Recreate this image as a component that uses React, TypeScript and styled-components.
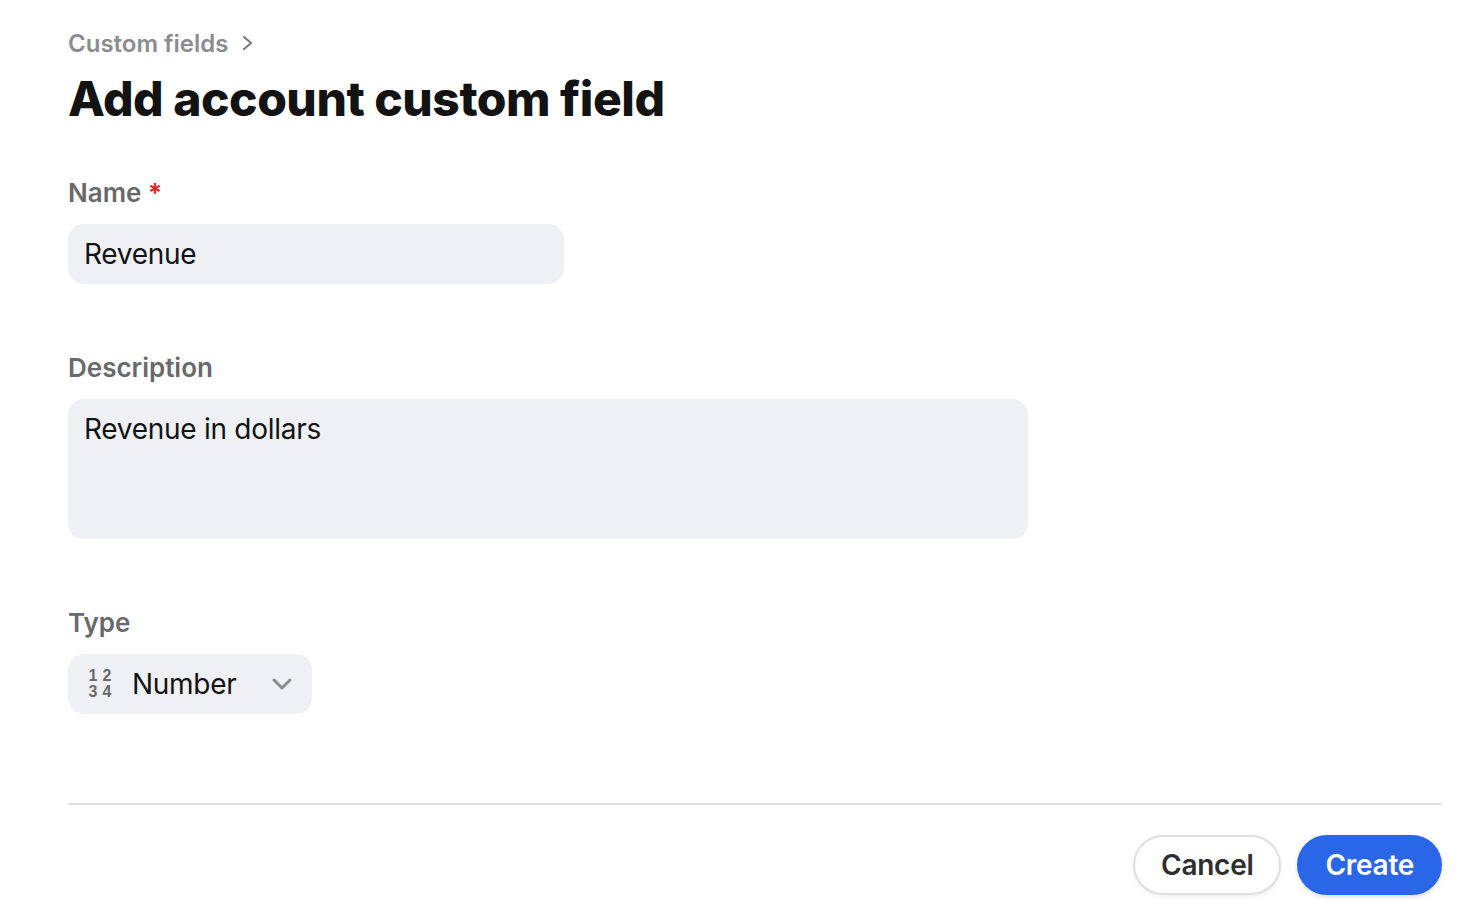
import React from 'react';
import styled, { createGlobalStyle, css } from 'styled-components';

const GlobalStyle = createGlobalStyle`
  * { box-sizing: border-box; }
  body { margin: 0; background: #fff; color: #131313; font-family: Inter, "Liberation Sans", sans-serif; font-optical-sizing: none; }
`;

const Form = styled.form`
  padding: 28px 38px 16px 68px;
`;

const Breadcrumb = styled.nav`
  display: flex;
  align-items: center;
  gap: 14px;
  height: 32px;
  color: #8b8c8f;
`;

const BreadcrumbLink = styled.a`
  color: inherit;
  font-size: 24px;
  font-weight: 600;
  line-height: 32px;
  text-decoration: none;
`;

const Title = styled.h1`
  margin: 8px 0 46px;
  font-size: 48px;
  font-weight: 800;
  line-height: 62px;
  letter-spacing: -0.01em;
`;

const Field = styled.div`
  display: flex;
  flex-direction: column;
  align-items: flex-start;
  gap: 14px;
  margin-bottom: 67px;
`;

const Label = styled.label`
  color: #68696b;
  font-size: 26px;
  font-weight: 600;
  line-height: 34px;
`;

const Required = styled.span`
  color: #e0261f;
`;

const control = css`
  border: 0;
  border-radius: 16px;
  background: #eff0f4;
  color: #131313;
  font: 400 28px/36px Inter, "Liberation Sans", sans-serif;
  font-optical-sizing: none;
  letter-spacing: -0.01em;
  outline: none;
`;

const TextInput = styled.input`
  ${control}
  width: 496px;
  max-width: 100%;
  height: 60px;
  padding: 12px 16px;
`;

const TextArea = styled.textarea`
  ${control}
  width: 960px;
  max-width: 100%;
  height: 140px;
  padding: 12px 16px;
  resize: none;
`;

const SelectBox = styled.div`
  display: grid;
  grid-template-columns: 64px 1fr 60px;
  align-items: center;
  width: 244px;
  height: 60px;
`;

const Select = styled.select`
  ${control}
  grid-column: 1 / -1;
  grid-row: 1;
  width: 100%;
  height: 60px;
  padding: 12px 60px 12px 64px;
  appearance: none;
`;

const NumberIcon = styled.span`
  display: grid;
  grid-template-columns: 14px 14px;
  grid-column: 1;
  grid-row: 1;
  justify-self: center;
  z-index: 1;
  color: #68696b;
  font-family: "Liberation Sans", sans-serif;
  font-size: 16px;
  font-weight: 700;
  line-height: 16px;
  text-align: center;
  pointer-events: none;
`;

const Chevron = styled.svg`
  grid-column: 3;
  grid-row: 1;
  justify-self: center;
  z-index: 1;
  pointer-events: none;
`;

const Footer = styled.footer`
  display: flex;
  justify-content: flex-end;
  gap: 16px;
  padding-top: 30px;
  margin-top: 89px;
  border-top: 2px solid #dfdfdf;
`;

const Button = styled.button<{ $primary?: boolean }>`
  height: 60px;
  padding: 0 26px;
  border: 2px solid ${p => (p.$primary ? '#2a66e8' : '#dfdfdf')};
  border-radius: 30px;
  background: ${p => (p.$primary ? '#2a66e8' : '#fff')};
  color: ${p => (p.$primary ? '#fff' : '#2e2e2f')};
  box-shadow: 0 2px 4px rgba(0, 0, 0, ${p => (p.$primary ? 0.14 : 0.06)});
  font: 600 28px/36px Inter, "Liberation Sans", sans-serif;
  font-optical-sizing: none;
  letter-spacing: -0.01em;
`;

export default function App() {
  return (
    <>
      <GlobalStyle />
      <Form onSubmit={e => e.preventDefault()}>
        <Breadcrumb aria-label="Breadcrumb">
          <BreadcrumbLink href="#">Custom fields</BreadcrumbLink>
          <svg width="10" height="16" viewBox="0 0 10 16" fill="none" stroke="#77787a" strokeWidth="2" strokeLinecap="round" strokeLinejoin="round" aria-hidden="true">
            <path d="M2 1l7 6-7 6" />
          </svg>
        </Breadcrumb>
        <Title>Add account custom field</Title>
        <Field>
          <Label htmlFor="name">Name <Required>*</Required></Label>
          <TextInput id="name" defaultValue="Revenue" required />
        </Field>
        <Field>
          <Label htmlFor="description">Description</Label>
          <TextArea id="description" defaultValue="Revenue in dollars" />
        </Field>
        <Field>
          <Label htmlFor="type">Type</Label>
          <SelectBox>
            <Select id="type" defaultValue="number">
              <option value="number">Number</option>
            </Select>
            <NumberIcon aria-hidden="true">
              <span>1</span><span>2</span>
              <span>3</span><span>4</span>
            </NumberIcon>
            <Chevron width="22" height="14" viewBox="0 0 22 14" fill="none" stroke="#8b8c8f" strokeWidth="3" strokeLinecap="round" strokeLinejoin="round" aria-hidden="true">
              <path d="M3 3l8 8 8-8" />
            </Chevron>
          </SelectBox>
        </Field>
        <Footer>
          <Button type="button">Cancel</Button>
          <Button type="submit" $primary>Create</Button>
        </Footer>
      </Form>
    </>
  );
}
